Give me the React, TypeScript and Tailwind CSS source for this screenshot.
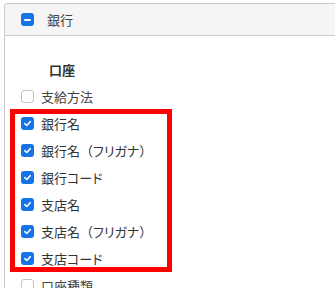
import React from "react";

const Check = ({ checked }: { checked: boolean }) =>
  checked ? (
    <span className="flex h-[13px] w-[13px] shrink-0 items-center justify-center rounded-[3px] bg-[#1473e6]">
      <svg width="9" height="9" viewBox="0 0 10 10" fill="none">
        <path d="M2 5.2 L4.2 7.2 L8 3" stroke="white" strokeWidth="1.8" strokeLinecap="round" strokeLinejoin="round" />
      </svg>
    </span>
  ) : (
    <span className="h-[13px] w-[13px] shrink-0 rounded-[3px] border border-[#c4c4c4] bg-white" />
  );

const rows: [string, string, boolean][] = [
  ["支給方法", "", false],
  ["銀行名", "", true],
  ["銀行名", "フリガナ", true],
  ["銀行コード", "", true],
  ["支店名", "", true],
  ["支店名", "フリガナ", true],
  ["支店コード", "", true],
  ["口座種類", "", false],
];

export default function App() {
  return (
    <div
      className="relative h-[288px] w-[335px] overflow-hidden bg-white pl-[4px] pt-[3px] text-[13px] text-[#333]"
      style={{ fontFamily: '"Noto Sans CJK JP", "Noto Sans", sans-serif' }}
    >
      <div className="h-[400px] rounded-tl-[4px] border-l border-t border-[#c9c9c9]">
        <div className="flex h-[32px] items-center gap-[13px] rounded-tl-[4px] border-b border-[#cccccc] bg-[#f5f5f5] pl-[16px]">
          <span className="flex h-[13px] w-[13px] items-center justify-center rounded-[3px] bg-[#1473e6]">
            <span className="h-[2px] w-[7px] rounded bg-white" />
          </span>
          <span className="text-[#444]">銀行</span>
        </div>
        <div className="pl-[16px]">
          <div className="mt-[24px] flex h-[20px] items-center pl-[28px] font-bold text-[#333]">口座</div>
          <div className="mt-[3px] flex flex-col">
            {rows.map(([label, kana, checked]) => (
              <div key={label + kana} className="flex h-[27px] items-center gap-[7px]">
                <Check checked={checked} />
                <span className={checked ? "text-[#333]" : "text-[#444]"}>
                  <span className="[font-feature-settings:'palt']">{label}</span>
                  {kana && (
                    <>
                      （<span className="[font-feature-settings:'palt']">{kana}</span>）
                    </>
                  )}
                </span>
              </div>
            ))}
          </div>
        </div>
      </div>
      <div className="absolute left-[10px] top-[109px] h-[163px] w-[162px] border-[5px] border-[#ff0000]" />
    </div>
  );
}
